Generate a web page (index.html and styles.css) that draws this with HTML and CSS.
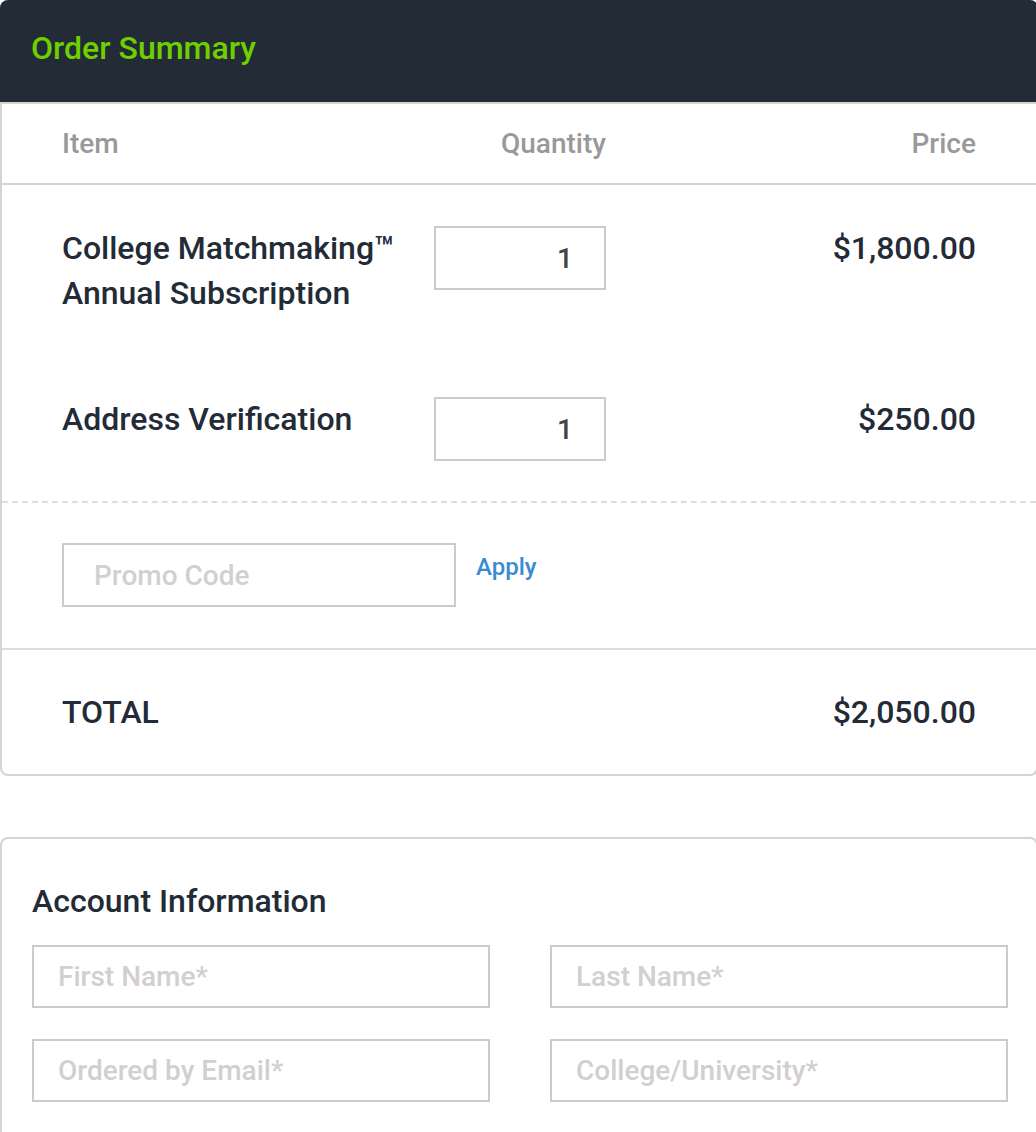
FILE: index.html
```html
<!DOCTYPE html>
<html lang="en">
<head>
<meta charset="utf-8">
<title>Order Summary</title>
<link rel="stylesheet" href="styles.css">
</head>
<body>
<main class="page">
  <section class="card order">
    <header class="card-head">
      <h2 class="card-title">Order Summary</h2>
    </header>
    <div class="row table-head">
      <span class="col-item">Item</span>
      <span class="col-qty">Quantity</span>
      <span class="col-price">Price</span>
    </div>
    <div class="items">
      <div class="row line-item">
        <span class="col-item item-name">College Matchmaking™<br>Annual Subscription</span>
        <input class="col-qty qty-input" type="text" value="1" aria-label="Quantity">
        <span class="col-price item-price">$1,800.00</span>
      </div>
      <div class="row line-item">
        <span class="col-item item-name">Address Verification</span>
        <input class="col-qty qty-input" type="text" value="1" aria-label="Quantity">
        <span class="col-price item-price">$250.00</span>
      </div>
    </div>
    <div class="promo">
      <input class="promo-input" type="text" placeholder="Promo Code">
      <a class="promo-apply" href="#">Apply</a>
    </div>
    <div class="row total">
      <span class="total-label">TOTAL</span>
      <span class="col-price total-price">$2,050.00</span>
    </div>
  </section>

  <section class="card account">
    <h3 class="account-title">Account Information</h3>
    <div class="field-grid">
      <input class="field" type="text" placeholder="First Name*">
      <input class="field" type="text" placeholder="Last Name*">
      <input class="field" type="text" placeholder="Ordered by Email*">
      <input class="field" type="text" placeholder="College/University*">
    </div>
  </section>
</main>
</body>
</html>
```
FILE: styles.css
```css
html, body {
  margin: 0;
  padding: 0;
  overflow: hidden;
  background: #ffffff;
}

body {
  font-family: Roboto, "Liberation Sans", Arial, sans-serif;
  font-weight: 500;
  color: #222b36;
}

.page {
  width: 1038px;
}

.card {
  background: #ffffff;
  border: 2px solid #d6d3d3;
  border-radius: 8px;
}

.order {
  border-top: 0;
}

.card-head {
  margin: 0 -2px;
  height: 104px;
  background: #222b36;
  border-radius: 8px 8px 0 0;
  border-bottom: 2px solid #d6d3d3;
  display: flex;
  align-items: center;
  padding: 0 31px;
  box-sizing: border-box;
}

.card-title {
  margin: 0 0 6px;
  font-size: 32px;
  font-weight: 500;
  color: #6fd000;
  line-height: 1;
}

.row {
  display: grid;
  grid-template-columns: 372px 172px 1fr;
  padding: 0 60px 0 60px;
  font-size: 32px;
}

.col-price {
  text-align: right;
  grid-column: 3;
}

.table-head {
  padding-top: 20px;
  padding-bottom: 19px;
  font-size: 28px;
  line-height: 40px;
  color: #999999;
  border-bottom: 2px solid #d6d3d3;
}

.table-head .col-qty {
  text-align: right;
}

.line-item {
  padding-top: 41px;
  padding-bottom: 40px;
  line-height: 45px;
  align-items: start;
}

.item-name {
  color: #222b36;
}

.qty-input {
  box-sizing: border-box;
  width: 172px;
  height: 64px;
  border: 2px solid #cccccc;
  border-radius: 0;
  padding: 0 31px 0 10px;
  margin: 0;
  text-align: right;
  font-family: inherit;
  font-weight: 500;
  font-size: 28px;
  color: #444444;
  background: #ffffff;
}

.item-price {
  color: #222b36;
}

.promo {
  border-top: 2px dashed #dddddd;
  padding: 40px 60px 41px;
  display: flex;
  align-items: flex-start;
  gap: 20px;
}

.promo-input {
  box-sizing: border-box;
  width: 394px;
  height: 64px;
  border: 2px solid #cccccc;
  border-radius: 0;
  padding: 0 30px;
  margin: 0;
  font-family: inherit;
  font-weight: 500;
  font-size: 28px;
  color: #444444;
}

.promo-input::placeholder,
.field::placeholder {
  color: #d3cfcf;
  opacity: 1;
}

.promo-apply {
  font-size: 24px;
  line-height: 49px;
  color: #3a8bd0;
  text-decoration: none;
}

.total {
  border-top: 2px solid #dddddd;
  padding-top: 40px;
  padding-bottom: 39px;
  line-height: 45px;
}

.total-label {
  grid-column: 1;
}

.account {
  margin-top: 61px;
  padding: 44px 28px 40px 30px;
}

.account-title {
  margin: 0 0 26px;
  font-size: 32px;
  line-height: 36px;
  font-weight: 500;
  color: #222b36;
}

.field-grid {
  display: grid;
  grid-template-columns: 458px 458px;
  column-gap: 60px;
  row-gap: 31px;
}

.field {
  box-sizing: border-box;
  height: 63px;
  border: 2px solid #cccccc;
  border-radius: 0;
  padding: 0 24px;
  margin: 0;
  font-family: inherit;
  font-weight: 500;
  font-size: 28px;
  color: #444444;
  width: 100%;
}
```
